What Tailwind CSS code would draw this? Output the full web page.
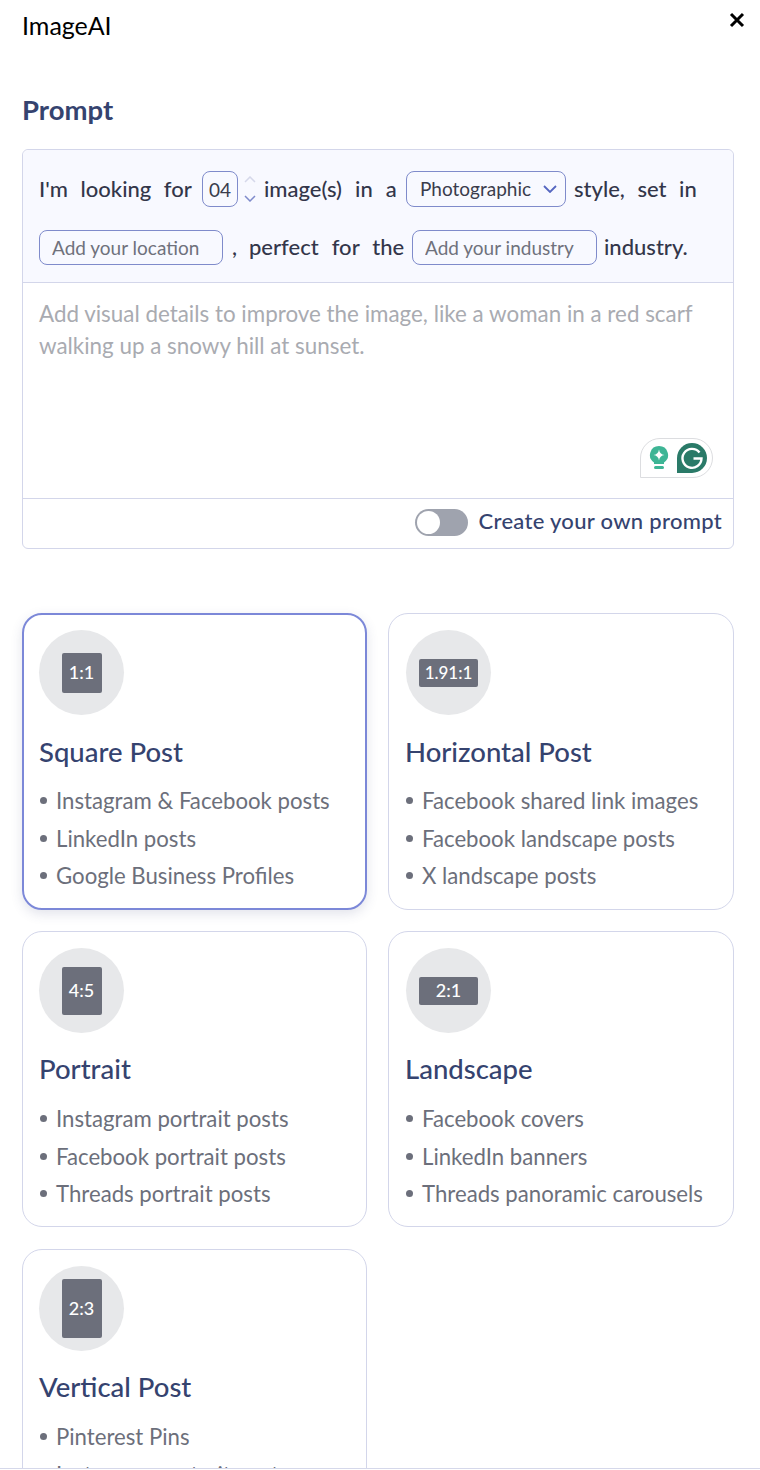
<!DOCTYPE html>
<html lang="en">
<head>
    <meta charset="UTF-8">
    <title>ImageAI</title>
    <script src="https://cdn.jsdelivr.net/npm/@tailwindcss/browser@4"></script>
</head>
<body class="bg-white font-['Lato',sans-serif]">
    <div class="w-[760px] h-[1469px] overflow-hidden border-b border-[#d5d8ea]">
        <header class="flex justify-between h-[90px] pl-[22px] pr-[14px] pt-[9px]">
            <h1 class="text-[25px] leading-[32px] text-black">ImageAI</h1>
            <button class="w-[18px] h-[18px] mt-[2px]">
                <svg viewBox="0 0 18 18" class="w-[18px] h-[18px]" fill="none" stroke="#000" stroke-width="3"><path d="M3 3l12 12M15 3L3 15"/></svg>
            </button>
        </header>

        <main class="px-[22px] w-[734px] box-content">
            <h2 class="text-[27.500px] leading-[40px] font-bold text-[#35436f]">Prompt</h2>

            <section class="mt-[19px] w-[712px] h-[400px] border border-[#d3d6ea] rounded-[6px] flex flex-col">
                <div class="h-[133px] bg-[#f8f9ff] border-b border-[#d3d6ea] rounded-t-[6px] pl-[16px] pt-[21px] text-[22px] text-[#33364a] font-medium [word-spacing:7px]">
                    <div class="flex items-center h-[36px]">
                        <span class="w-[163px] pb-[2px]">I'm looking for</span>
                        <input value="04" class="w-[36px] h-[36px] border border-[#7f8bcb] rounded-[8px] text-center text-[19px] font-normal outline-none text-[#3a3c4c]">
                        <span class="w-[26px] pr-[2px] flex flex-col items-center gap-[12px]">
                            <svg viewBox="0 0 12 7" class="w-[12px] h-[7px]" fill="none" stroke="#d5d8ea" stroke-width="1.5"><path d="M1 6l5-5 5 5"/></svg>
                            <svg viewBox="0 0 12 7" class="w-[12px] h-[7px]" fill="none" stroke="#7f8bcb" stroke-width="1.5"><path d="M1 1l5 5 5-5"/></svg>
                        </span>
                        <span class="w-[142px] pb-[2px] [word-spacing:7.500px]">image(s) in a</span>
                        <div class="relative w-[160px] h-[36px] mr-[8px] border border-[#7f8bcb] rounded-[8px] flex items-center pl-[13px] text-[19px] font-normal text-[#3a3c4c] [word-spacing:0]">
                            Photographic
                            <svg viewBox="0 0 14 8" class="absolute right-[8px] top-[13px] w-[14px] h-[8px]" fill="none" stroke="#5566c0" stroke-width="1.800"><path d="M1 1l6 6 6-6"/></svg>
                        </div>
                        <span class="pb-[2px]">style, set in</span>
                    </div>
                    <div class="flex items-center h-[36px] mt-[22px]">
                        <input placeholder="Add your location" class="w-[184px] h-[35px] border border-[#7f8bcb] rounded-[8px] pl-[12px] text-[19px] font-normal outline-none placeholder:text-[#6f717c] [word-spacing:0]">
                        <span class="w-[26px] pl-[9px] pb-[2px]">,</span>
                        <span class="w-[163px] pb-[2px] [word-spacing:7.500px]">perfect for the</span>
                        <input placeholder="Add your industry" class="w-[185px] h-[35px] border border-[#7f8bcb] rounded-[8px] pl-[12px] text-[19px] font-normal outline-none placeholder:text-[#6f717c] [word-spacing:0]">
                        <span class="pl-[7px] pb-[2px] [word-spacing:0]">industry.</span>
                    </div>
                </div>

                <div class="relative h-[216px] border-b border-[#d3d6ea] px-[16px] pt-[15px]">
                    <p class="text-[22.400px] leading-[32px] text-[#a9abb1]">Add visual details to improve the image, like a woman in a red scarf walking up a snowy hill at sunset.</p>
                    <div class="absolute left-[617px] top-[155px] w-[73px] h-[40px] border border-[#dcdde0] rounded-[20px] rounded-bl-none flex items-center pl-[8px] gap-[7px] bg-white">
                        <svg viewBox="0 0 20 26" class="w-[20px] h-[26px]">
                            <path d="M10 1a9 9 0 0 0-5 16.500V19h10v-1.500A9 9 0 0 0 10 1z" fill="#3eb595"/>
                            <path d="M10 4.500Q10.700 9.300 15.500 10 10.700 10.700 10 15.500 9.300 10.700 4.500 10 9.300 9.300 10 4.500z" fill="#fff"/>
                            <rect x="5" y="21" width="10" height="3" rx="1.500" fill="#3eb595"/>
                        </svg>
                        <svg viewBox="0 0 32 32" class="w-[32px] h-[32px]">
                            <path d="M16 1a15 15 0 0 1 0 30H1V16A15 15 0 0 1 16 1z" fill="#2a7a68"/>
                            <path d="M23.500 10.500a9.500 9.500 0 1 0 2 6h-8" fill="none" stroke="#fff" stroke-width="2.400"/>
                        </svg>
                    </div>
                </div>

                <div class="flex-1 flex items-center justify-end gap-[11px] pr-[11px] pb-[3px]">
                    <span class="w-[53px] h-[27px] rounded-full bg-[#9fa3ae] flex items-center">
                        <span class="w-[23px] h-[23px] ml-[2px] rounded-full bg-white"></span>
                    </span>
                    <span class="text-[22px] font-medium tracking-[0.300px] text-[#35436f] -mt-[4px]">Create your own prompt</span>
                </div>
            </section>

            <section class="mt-[64px] grid grid-cols-[345px_346px] gap-x-[21px] gap-y-[21px]">
                <article class="h-[297px] rounded-[20px] border-2 border-[#7c88d8] shadow-[0_4px_12px_rgba(60,70,120,0.15)] px-[15px] pt-[15px]">
                    <div class="w-[85px] h-[85px] rounded-full bg-[#e7e8ea] flex items-center justify-center">
                        <span class="w-[40px] h-[40px] rounded-[2px] bg-[#6c6f7b] text-white text-[18px] font-medium flex items-center justify-center">1:1</span>
                    </div>
                    <h3 class="mt-[19px] text-[27.500px] leading-[36px] font-medium text-[#35436f]">Square Post</h3>
                    <ul class="mt-[12px] text-[22.200px] leading-[37.500px] text-[#6c6f7b]">
                        <li class="flex items-center gap-[9px]"><span class="w-[7px] h-[7px] ml-px rounded-full bg-[#6c6f7b]"></span>Instagram &amp; Facebook posts</li>
                        <li class="flex items-center gap-[9px]"><span class="w-[7px] h-[7px] ml-px rounded-full bg-[#6c6f7b]"></span>LinkedIn posts</li>
                        <li class="flex items-center gap-[9px]"><span class="w-[7px] h-[7px] ml-px rounded-full bg-[#6c6f7b]"></span>Google Business Profiles</li>
                    </ul>
                </article>
                <article class="h-[297px] rounded-[20px] border border-[#d3d6ea] px-[16px] pt-[16px]">
                    <div class="w-[85px] h-[85px] ml-px rounded-full bg-[#e7e8ea] flex items-center justify-center">
                        <span class="w-[59px] h-[28px] shrink-0 rounded-[2px] bg-[#6c6f7b] text-white text-[17px] font-medium flex items-center justify-center">1.91:1</span>
                    </div>
                    <h3 class="mt-[19px] text-[27.500px] leading-[36px] font-medium text-[#35436f]">Horizontal Post</h3>
                    <ul class="mt-[12px] text-[22.200px] leading-[37.500px] text-[#6c6f7b]">
                        <li class="flex items-center gap-[9px]"><span class="w-[7px] h-[7px] ml-px rounded-full bg-[#6c6f7b]"></span>Facebook shared link images</li>
                        <li class="flex items-center gap-[9px]"><span class="w-[7px] h-[7px] ml-px rounded-full bg-[#6c6f7b]"></span>Facebook landscape posts</li>
                        <li class="flex items-center gap-[9px]"><span class="w-[7px] h-[7px] ml-px rounded-full bg-[#6c6f7b]"></span>X landscape posts</li>
                    </ul>
                </article>
                <article class="h-[296px] mb-px rounded-[20px] border border-[#d3d6ea] px-[16px] pt-[16px]">
                    <div class="w-[85px] h-[85px] rounded-full bg-[#e7e8ea] flex items-center justify-center">
                        <span class="w-[40px] h-[48px] rounded-[2px] bg-[#6c6f7b] text-white text-[18px] font-medium flex items-center justify-center">4:5</span>
                    </div>
                    <h3 class="mt-[18px] text-[27.500px] leading-[36px] font-medium text-[#35436f]">Portrait</h3>
                    <ul class="mt-[13px] text-[22.200px] leading-[37.500px] text-[#6c6f7b]">
                        <li class="flex items-center gap-[9px]"><span class="w-[7px] h-[7px] ml-px rounded-full bg-[#6c6f7b]"></span>Instagram portrait posts</li>
                        <li class="flex items-center gap-[9px]"><span class="w-[7px] h-[7px] ml-px rounded-full bg-[#6c6f7b]"></span>Facebook portrait posts</li>
                        <li class="flex items-center gap-[9px]"><span class="w-[7px] h-[7px] ml-px rounded-full bg-[#6c6f7b]"></span>Threads portrait posts</li>
                    </ul>
                </article>
                <article class="h-[296px] mb-px rounded-[20px] border border-[#d3d6ea] px-[16px] pt-[16px]">
                    <div class="w-[85px] h-[85px] ml-px rounded-full bg-[#e7e8ea] flex items-center justify-center">
                        <span class="w-[59px] h-[28px] shrink-0 rounded-[2px] bg-[#6c6f7b] text-white text-[18px] font-medium flex items-center justify-center">2:1</span>
                    </div>
                    <h3 class="mt-[18px] text-[27.500px] leading-[36px] font-medium text-[#35436f]">Landscape</h3>
                    <ul class="mt-[13px] text-[22.200px] leading-[37.500px] text-[#6c6f7b]">
                        <li class="flex items-center gap-[9px]"><span class="w-[7px] h-[7px] ml-px rounded-full bg-[#6c6f7b]"></span>Facebook covers</li>
                        <li class="flex items-center gap-[9px]"><span class="w-[7px] h-[7px] ml-px rounded-full bg-[#6c6f7b]"></span>LinkedIn banners</li>
                        <li class="flex items-center gap-[9px]"><span class="w-[7px] h-[7px] ml-px rounded-full bg-[#6c6f7b]"></span>Threads panoramic carousels</li>
                    </ul>
                </article>
                <article class="h-[297px] rounded-[20px] border border-[#d3d6ea] px-[16px] pt-[16px]">
                    <div class="w-[85px] h-[85px] rounded-full bg-[#e7e8ea] flex items-center justify-center">
                        <span class="w-[40px] h-[59px] rounded-[2px] bg-[#6c6f7b] text-white text-[18px] font-medium flex items-center justify-center">2:3</span>
                    </div>
                    <h3 class="mt-[18px] text-[27.500px] leading-[36px] font-medium text-[#35436f]">Vertical Post</h3>
                    <ul class="mt-[13px] text-[22.200px] leading-[37.500px] text-[#6c6f7b]">
                        <li class="flex items-center gap-[9px]"><span class="w-[7px] h-[7px] ml-px rounded-full bg-[#6c6f7b]"></span>Pinterest Pins</li>
                        <li class="flex items-center gap-[9px]"><span class="w-[7px] h-[7px] ml-px rounded-full bg-[#6c6f7b]"></span>Instagram portrait posts</li>
                    </ul>
                </article>
            </section>
        </main>
    </div>
</body>
</html>
